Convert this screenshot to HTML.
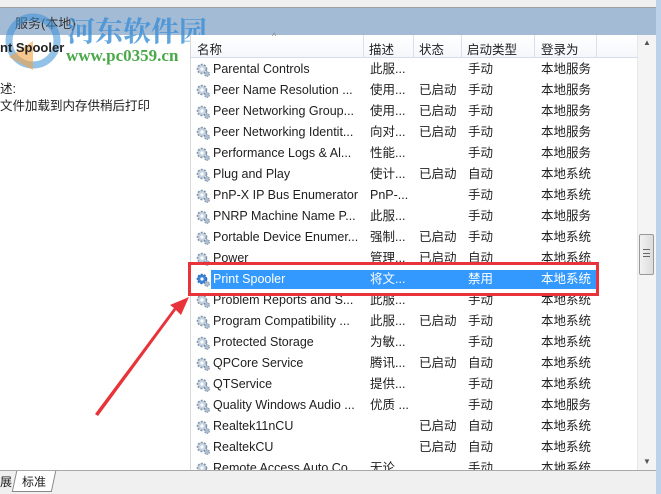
<!DOCTYPE html>
<html><head><meta charset="utf-8"><style>
*{margin:0;padding:0;box-sizing:border-box}
body{width:661px;height:494px;overflow:hidden;background:#fff;position:relative;font-family:"Liberation Sans","Noto Sans CJK SC",sans-serif;font-size:12.5px;color:#1e1e1e}
.a{position:absolute;white-space:nowrap}
.row{position:absolute;left:192px;width:445px;height:21px;line-height:21px}
.row span{position:absolute;top:0}
.g{position:absolute;left:4px;top:4px;width:14px;height:14px}
</style></head><body>
<div class="a" style="left:0;top:0;width:661px;height:8px;background:#f0f0f0;border-bottom:1px solid #a0a0a0"></div>
<div class="a" style="left:0;top:8px;width:661px;height:27px;background:#a4bbd6"></div>
<div class="a" style="left:15px;top:13px;color:#333;font-size:13px">服务(本地)</div>
<svg class="a" style="left:4px;top:12px" width="58" height="58" viewBox="0 0 58 58"><circle cx="29" cy="29" r="24" fill="none" stroke="#3a8fd6" stroke-width="7" opacity=".55"/><path d="M29 29 L29 58 L5 45Z" fill="#f0a040" opacity=".6"/></svg>
<div class="a" style="left:67px;top:10px;font-size:28px;font-weight:bold;color:#3a8fd6;opacity:.8;font-family:'Noto Serif CJK SC',serif">河东软件园</div>
<div class="a" style="left:66px;top:46px;font-size:17px;font-weight:bold;color:#4aa84a;font-family:'Liberation Serif',serif">www.pc0359.cn</div>
<div class="a" style="left:0;top:40px;font-weight:bold;font-size:13px;color:#222">nt Spooler</div>
<div class="a" style="left:0;top:78px">述:</div>
<div class="a" style="left:0;top:95px">文件加载到内存供稍后打印</div>
<div class="a" style="left:190px;top:35px;width:1px;height:435px;background:#d8d8d8"></div>
<div class="a" style="left:191px;top:35px;width:446px;height:23px;background:linear-gradient(#fff,#f4f7fb);border-bottom:1px solid #d5dde8"></div>
<div class="a" style="left:272px;top:31px;font-size:9px;color:#888">^</div>
<div class="a" style="left:197px;top:39px">名称</div>
<div class="a" style="left:363px;top:35px;width:1px;height:23px;background:#dde"></div>
<div class="a" style="left:369px;top:39px">描述</div>
<div class="a" style="left:413px;top:35px;width:1px;height:23px;background:#dde"></div>
<div class="a" style="left:419px;top:39px">状态</div>
<div class="a" style="left:461px;top:35px;width:1px;height:23px;background:#dde"></div>
<div class="a" style="left:467px;top:39px">启动类型</div>
<div class="a" style="left:534px;top:35px;width:1px;height:23px;background:#dde"></div>
<div class="a" style="left:541px;top:39px">登录为</div>
<div class="a" style="left:596px;top:35px;width:1px;height:23px;background:#dde"></div>
<div id="rows"></div>
<div class="a" style="left:637px;top:35px;width:19px;height:435px;background:#f4f4f4;border-left:1px solid #e8e8e8"></div>
<div class="a" style="left:643px;top:38px;font-size:8px;color:#555">▲</div>
<div class="a" style="left:643px;top:457px;font-size:8px;color:#555">▼</div>
<div class="a" style="left:639px;top:234px;width:15px;height:41px;background:linear-gradient(90deg,#f2f2f2,#dcdcdc);border:1px solid #999;border-radius:2px"></div>
<div class="a" style="left:643px;top:249px;width:7px;height:8px;border-top:1px solid #666;border-bottom:1px solid #666"></div>
<div class="a" style="left:643px;top:253px;width:7px;height:1px;background:#666"></div>
<div class="a" style="left:656px;top:0;width:5px;height:494px;background:#bcd2ea"></div>
<div class="a" style="left:0;top:470px;width:656px;height:24px;background:#f0f0f0;border-top:1px solid #a8a8a8"></div>
<div class="a" style="left:0;top:473px;font-size:12px">展</div>
<div class="a" style="left:14px;top:471px;width:40px;height:21px;border:1px solid #888;border-top:none;background:#fff;transform:skewX(-12deg)"></div>
<div class="a" style="left:22px;top:473px;font-size:12px">标准</div>
<div class="a" style="left:188px;top:262px;width:411px;height:34px;border:3px solid #e8333a"></div>
<svg class="a" style="left:0;top:0" width="661" height="494"><polygon points="95,414 98,416 176,310 181,315 189,297 170,305 174,308" fill="#e8333a"/></svg>
<script>
var d=[["Parental Controls","此服...","","手动","本地服务"],["Peer Name Resolution ...","使用...","已启动","手动","本地服务"],["Peer Networking Group...","使用...","已启动","手动","本地服务"],["Peer Networking Identit...","向对...","已启动","手动","本地服务"],["Performance Logs & Al...","性能...","","手动","本地服务"],["Plug and Play","使计...","已启动","自动","本地系统"],["PnP-X IP Bus Enumerator","PnP-...","","手动","本地系统"],["PNRP Machine Name P...","此服...","","手动","本地服务"],["Portable Device Enumer...","强制...","已启动","手动","本地系统"],["Power","管理...","已启动","自动","本地系统"],["Print Spooler","将文...","","禁用","本地系统"],["Problem Reports and S...","此服...","","手动","本地系统"],["Program Compatibility ...","此服...","已启动","手动","本地系统"],["Protected Storage","为敏...","","手动","本地系统"],["QPCore Service","腾讯...","已启动","自动","本地系统"],["QTService","提供...","","手动","本地系统"],["Quality Windows Audio ...","优质 ...","","手动","本地服务"],["Realtek11nCU","","已启动","自动","本地系统"],["RealtekCU","","已启动","自动","本地系统"],["Remote Access Auto Co...","无论...","","手动","本地系统"]];
var h="",x=[21,178,227,276,349];
d.forEach(function(r,i){var y=59+i*21,sel=i==10;
h+='<div class="row" style="top:'+y+'px;">';
if(sel)h+='<div style="position:absolute;left:19px;top:1px;width:385px;height:19px;background:#3399ff"></div>';
h+='<svg class="g" viewBox="0 0 14 14"><circle cx="6" cy="6" r="4.5" fill="'+(sel?'#3d85d8':'#c9d4e0')+'" stroke="'+(sel?'#2a6cc0':'#7f95ad')+'" stroke-width="1.6" stroke-dasharray="2 1.3"/><circle cx="6" cy="6" r="1.6" fill="#fff"/><circle cx="11" cy="11" r="2.4" fill="#b0bfd0" stroke="#7f95ad" stroke-dasharray="1.5 1"/></svg>';
r.forEach(function(t,j){h+='<span style="left:'+x[j]+'px;'+(sel?'color:#fff':'')+'">'+t.replace(/&/g,"&amp;")+'</span>'});
h+='</div>'});
document.getElementById("rows").outerHTML='<div style="position:absolute;left:0;top:0;width:637px;height:470px;overflow:hidden">'+h+'</div>';
</script>
</body></html>
